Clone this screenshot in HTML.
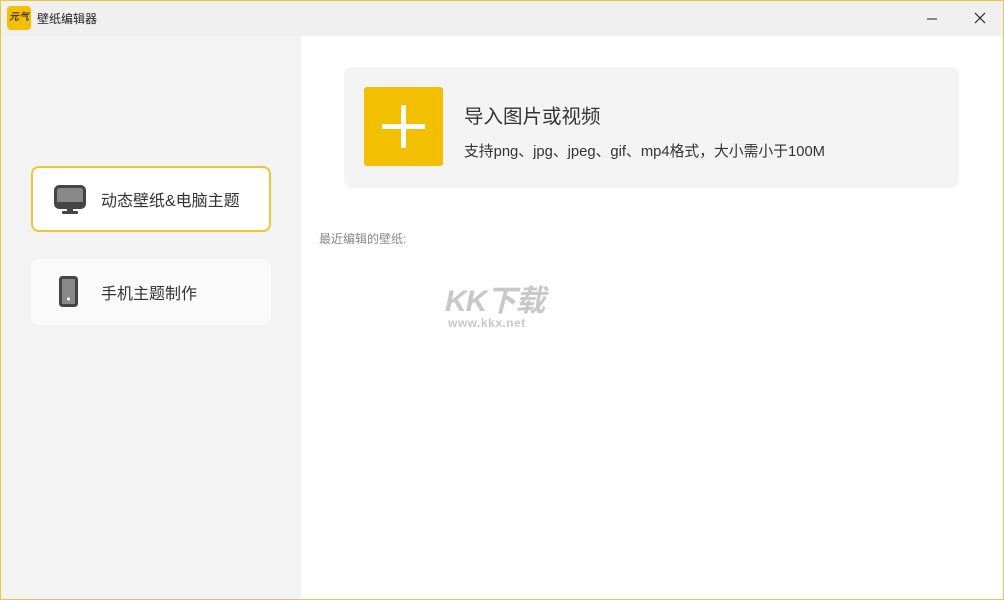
<!DOCTYPE html>
<html><head><meta charset="utf-8"><style>
*{margin:0;padding:0;box-sizing:border-box}
body{width:1004px;height:600px;overflow:hidden;font-family:"Liberation Sans","Noto Sans CJK SC",sans-serif;background:#fff;position:relative}
.frame{position:absolute;inset:0;border:1px solid #e8c64a;pointer-events:none;z-index:10}
.title{position:absolute;left:0;top:0;width:1004px;height:36px;background:#f0f0f0}
.logo{position:absolute;left:7px;top:6px;width:24px;height:24px;background:#f3c000;border-radius:4px;font-size:10px;font-weight:bold;color:#4a3a00;text-align:center;line-height:24px;font-style:italic}
.ttext{position:absolute;left:37px;top:10px;font-size:12px;color:#222}
.side{position:absolute;left:0;top:36px;width:301px;height:564px;background:#f3f3f3}
.card{position:absolute;left:31px;width:240px;height:66px;border-radius:8px;font-size:16px;color:#333}
.c1{top:166px;background:#fff;border:2px solid #f0c531}
.c2{top:259px;background:#fafafa}
.card span{position:absolute;left:70px;top:50%;transform:translateY(-50%)}
.c1 span{left:68px}
.imp{position:absolute;left:344px;top:67px;width:615px;height:121px;background:#f4f4f4;border-radius:8px}
.plus{position:absolute;left:20px;top:20px;width:79px;height:79px;background:#f3c000;border-radius:3px}
.plus:before{content:"";position:absolute;left:18px;top:37px;width:43px;height:5px;background:#fff}
.plus:after{content:"";position:absolute;left:37px;top:18px;width:5px;height:43px;background:#fff}
.h{position:absolute;left:120px;top:33px;font-size:19.5px;color:#333}
.s{position:absolute;left:120px;top:73px;font-size:14.8px;color:#333}
.recent{position:absolute;left:319px;top:230px;font-size:12px;color:#888}
.wm{position:absolute;left:445px;top:276px;font-size:30px;font-weight:bold;font-style:italic;color:#c8c8c8;letter-spacing:-1px}
.wm2{position:absolute;left:448px;top:316px;font-size:12px;font-weight:bold;color:#c8c8c8;letter-spacing:0.5px}
</style></head><body>
<div class="title"><div class="logo">元气</div><div class="ttext">壁纸编辑器</div>
<svg style="position:absolute;left:925px;top:12px" width="14" height="14"><line x1="2" y1="7" x2="12" y2="7" stroke="#222"/></svg>
<svg style="position:absolute;left:973px;top:11px" width="14" height="14"><path d="M2 2L12 12M12 2L2 12" stroke="#222" stroke-width="1.2"/></svg>
</div>
<div class="side"></div>
<div class="card c1"><svg style="position:absolute;left:21px;top:17px" width="34" height="32"><rect x="1.5" y="1.5" width="29" height="21" rx="4" fill="#888" stroke="#444" stroke-width="3"/><rect x="1" y="17" width="30" height="6" rx="2" fill="#444"/><rect x="13" y="23" width="6" height="4" fill="#444"/><rect x="8" y="26" width="16" height="3" rx="1" fill="#444"/></svg><span>动态壁纸&amp;电脑主题</span></div>
<div class="card c2"><svg style="position:absolute;left:28px;top:17px" width="20" height="32"><rect x="1.5" y="1.5" width="16" height="28" rx="2" fill="#888" stroke="#444" stroke-width="3"/><circle cx="9.5" cy="23" r="1.5" fill="#fff"/></svg><span>手机主题制作</span></div>
<div class="imp"><div class="plus"></div><div class="h">导入图片或视频</div><div class="s">支持png、jpg、jpeg、gif、mp4格式，大小需小于100M</div></div>
<div class="recent">最近编辑的壁纸:</div>
<div class="wm">KK下载</div><div class="wm2">www.kkx.net</div>
<div class="frame"></div>
</body></html>
